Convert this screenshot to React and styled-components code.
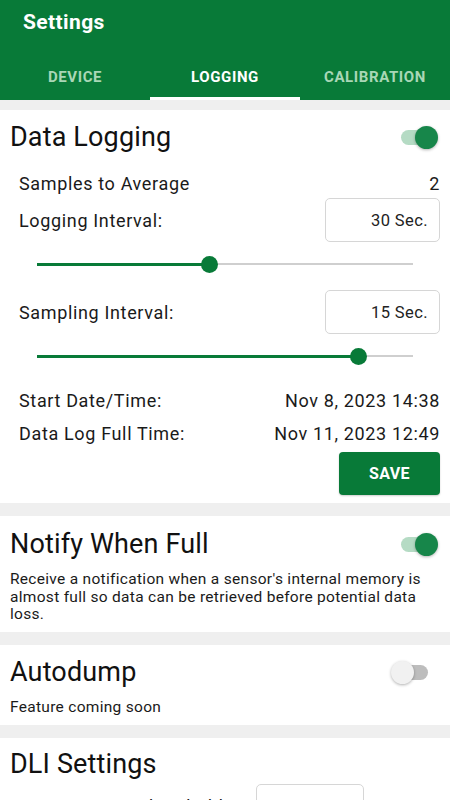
import styled, { createGlobalStyle } from "styled-components";

const GREEN = "#087a38";

const GlobalStyle = createGlobalStyle`
  html, body {
    margin: 0;
    padding: 0;
    background: #efefef;
    font-family: Roboto, "Noto Sans", sans-serif;
    color: #1a1a1a;
  }
  * { box-sizing: border-box; }
`;

const Page = styled.div`
  width: 450px;
  height: 800px;
  overflow: hidden;
  background: #efefef;
`;

const AppBar = styled.header`
  background: ${GREEN};
  color: #fff;
`;

const Title = styled.h1`
  margin: 0;
  height: 52px;
  padding: 10px 0 0 23px;
  font-size: 21px;
  line-height: 24px;
  font-weight: 700;
  letter-spacing: 0.4px;
`;

const Tabs = styled.nav`
  display: flex;
  height: 48px;
`;

const Tab = styled.div`
  flex: 1;
  display: flex;
  align-items: center;
  justify-content: center;
  font-size: 15px;
  font-weight: 700;
  letter-spacing: 0.6px;
  color: ${(p) => (p.$active ? "#ffffff" : "#a9d7b6")};
  border-bottom: 3px solid ${(p) => (p.$active ? "#ffffff" : "transparent")};
  padding-top: 5px;
`;

const Stack = styled.main`
  display: flex;
  flex-direction: column;
  gap: 13px;
  padding-top: 10px;
`;

const Card = styled.section`
  background: #fff;
  padding: 0 10px ${(p) => p.$pb || 8}px 10px;
`;

const CardHead = styled.div`
  display: flex;
  align-items: center;
  justify-content: space-between;
  height: ${(p) => p.$h || 54}px;
  padding-top: ${(p) => p.$pt || 0}px;
`;

const CardTitle = styled.h2`
  margin: 0;
  font-size: 27px;
  line-height: 32px;
  font-weight: 400;
  letter-spacing: 0.15px;
  color: #111;
`;

const Switch = styled.div`
  position: relative;
  width: 38px;
  height: 22px;
  margin-right: ${(p) => (p.$on ? 3 : 10)}px;
  &::before {
    content: "";
    position: absolute;
    left: 2px;
    right: 2px;
    top: 4px;
    height: 15px;
    border-radius: 8px;
    background: ${(p) => (p.$on ? "#b5dbc4" : "#bdbdbd")};
  }
  &::after {
    content: "";
    position: absolute;
    top: 0;
    ${(p) => (p.$on ? "right: -1px;" : "left: -1px;")}
    width: 23px;
    height: 23px;
    border-radius: 50%;
    background: ${(p) => (p.$on ? "#17864a" : "#f1f1f1")};
    box-shadow: 0 1px 3px rgba(0, 0, 0, 0.3);
  }
`;

const Body = styled.div`
  display: flex;
  flex-direction: column;
  padding-left: 9px;
`;

const Row = styled.div`
  display: flex;
  align-items: center;
  justify-content: space-between;
  height: ${(p) => p.$h || 24}px;
  margin-top: ${(p) => p.$mt || 0}px;
  font-size: 18px;
  letter-spacing: 0.65px;
  color: #1a1a1a;
`;

const ValueBox = styled.div`
  width: ${(p) => p.$w || 115}px;
  height: 44px;
  border: 1px solid #d6d6d6;
  border-radius: 5px;
  display: flex;
  align-items: center;
  justify-content: flex-end;
  padding-right: 11px;
  font-size: 16.5px;
  letter-spacing: 0.4px;
  color: #222;
`;

const SliderWrap = styled.div`
  height: 44px;
  margin: 0 27px 0 18px;
  display: flex;
  align-items: center;
`;

const Track = styled.div`
  position: relative;
  flex: 1;
  height: 2px;
  background: #cfcfcf;
`;

const Fill = styled.div`
  position: absolute;
  left: 0;
  top: -0.5px;
  height: 3px;
  background: ${GREEN};
`;

const Thumb = styled.div`
  position: absolute;
  top: 50%;
  width: 17px;
  height: 17px;
  margin: -8.5px 0 0 -8.5px;
  border-radius: 50%;
  background: ${GREEN};
`;

const Slider = ({ value }) => (
  <SliderWrap>
    <Track>
      <Fill style={{ width: `${value * 100}%` }} />
      <Thumb style={{ left: `${value * 100}%` }} />
    </Track>
  </SliderWrap>
);

const Actions = styled.div`
  display: flex;
  justify-content: flex-end;
  margin-top: 7px;
`;

const SaveButton = styled.button`
  width: 101px;
  height: 43px;
  border: none;
  border-radius: 4px;
  background: ${GREEN};
  color: #fff;
  font-family: Roboto, sans-serif;
  font-size: 16px;
  font-weight: 700;
  letter-spacing: 0.4px;
  box-shadow: 0 1px 2px rgba(0, 0, 0, 0.2);
`;

const Desc = styled.p`
  margin: 0;
  font-size: 15.5px;
  line-height: 17.5px;
  letter-spacing: 0.3px;
  color: #1a1a1a;
`;

export default function App() {
  return (
    <Page>
      <GlobalStyle />
      <AppBar>
        <Title>Settings</Title>
        <Tabs>
          <Tab>DEVICE</Tab>
          <Tab $active>LOGGING</Tab>
          <Tab>CALIBRATION</Tab>
        </Tabs>
      </AppBar>
      <Stack>
        <Card>
          <CardHead>
            <CardTitle>Data Logging</CardTitle>
            <Switch $on />
          </CardHead>
          <Body>
            <Row $mt={7}>
              <span>Samples to Average</span>
              <span>2</span>
            </Row>
            <Row $h={44} $mt={3}>
              <span>Logging Interval:</span>
              <ValueBox>30 Sec.</ValueBox>
            </Row>
            <Slider value={0.46} />
            <Row $h={44} $mt={4}>
              <span>Sampling Interval:</span>
              <ValueBox>15 Sec.</ValueBox>
            </Row>
            <Slider value={0.856} />
            <Row $mt={10}>
              <span>Start Date/Time:</span>
              <span>Nov 8, 2023 14:38</span>
            </Row>
            <Row $mt={9}>
              <span>Data Log Full Time:</span>
              <span>Nov 11, 2023 12:49</span>
            </Row>
            <Actions>
              <SaveButton>SAVE</SaveButton>
            </Actions>
          </Body>
        </Card>
        <Card $pb={8}>
          <CardHead $h={55}>
            <CardTitle>Notify When Full</CardTitle>
            <Switch $on />
          </CardHead>
          <Desc>
            Receive a notification when a sensor's internal memory is almost
            full so data can be retrieved before potential data loss.
          </Desc>
        </Card>
        <Card $pb={9}>
          <CardHead $h={54}>
            <CardTitle>Autodump</CardTitle>
            <Switch />
          </CardHead>
          <Desc>Feature coming soon</Desc>
        </Card>
        <Card>
          <CardHead $h={46} $pt={5}>
            <CardTitle>DLI Settings</CardTitle>
          </CardHead>
          <Body>
            <Row $h={44} $mt={0}>
              <span>Minimum DLI Threshold:</span>
              <ValueBox $w={108} style={{ marginRight: 76 }}>
                12
              </ValueBox>
            </Row>
          </Body>
        </Card>
      </Stack>
    </Page>
  );
}
